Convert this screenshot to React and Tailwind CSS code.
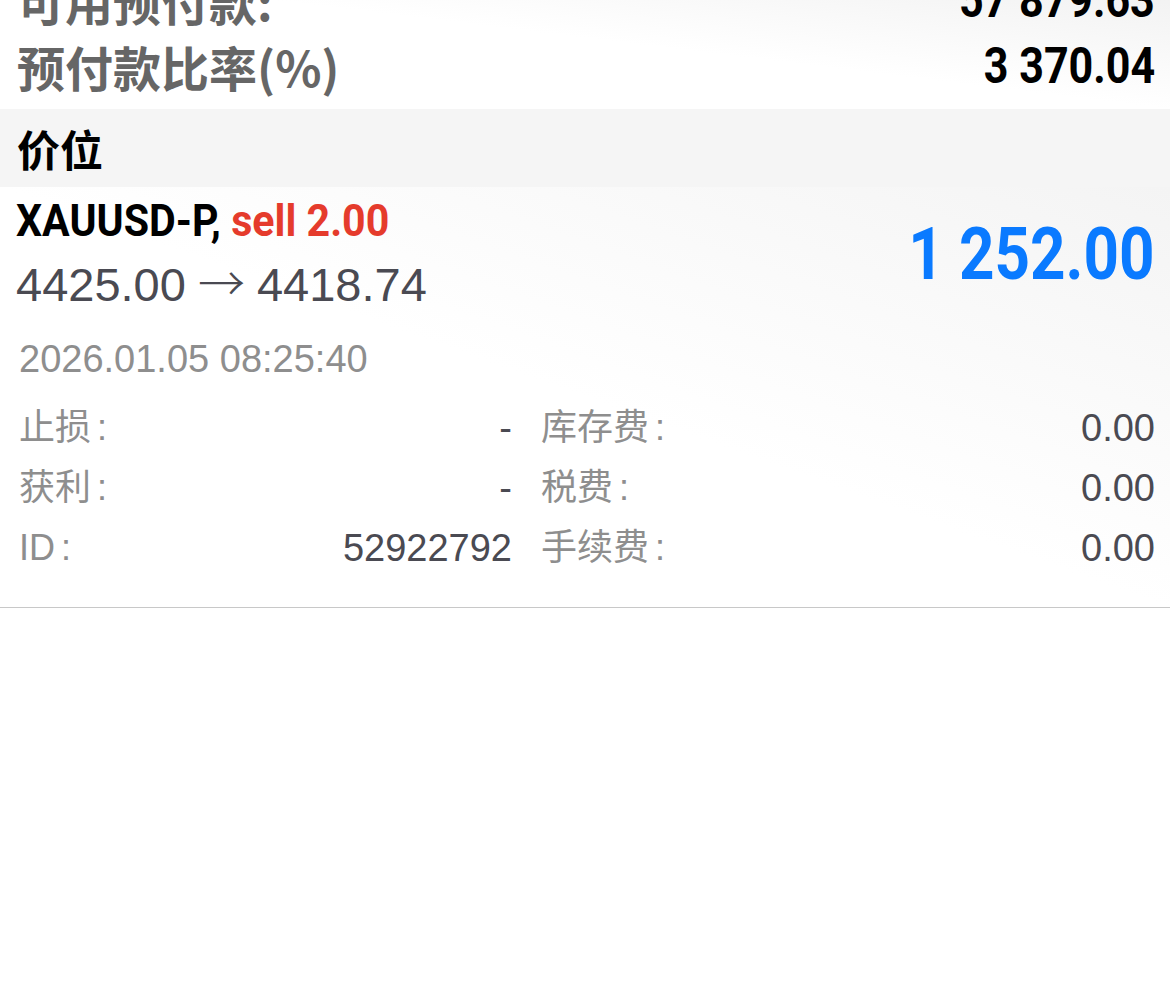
const bold = "font-['Roboto','Noto_Sans_CJK_SC',sans-serif] font-bold";
const cjkBold = "font-['Noto_Sans_CJK_SC',sans-serif] font-bold";
const regular = "font-['Liberation_Sans','Noto_Sans_CJK_SC',sans-serif]";

// Roboto bold squeezed a bit to look like the condensed face of the app
function Cond({ children, className = "", right = false }) {
  return (
    <span
      className={`inline-block whitespace-nowrap ${bold} ${right ? "origin-right" : "origin-left"} ${className}`}
    >
      {children}
    </span>
  );
}

function SummaryRow({ label, value }) {
  return (
    <div className="flex h-[66px] items-center justify-between pl-[17px] pr-[15px]">
      <span className={`${cjkBold} text-[48px] text-[#666666]`}>{label}</span>
      <Cond right className="scale-x-[0.86] text-[50px] text-black">{value}</Cond>
    </div>
  );
}

function Field({ label, value }) {
  return (
    <div className="flex h-[60px] items-center justify-between">
      <span className={`${regular} text-[36px] text-[#8e8e8e]`}>
        {label}
        <span className="ml-[6px]">:</span>
      </span>
      <span className={`${regular} text-[38px] text-[#4a4a52]`}>{value}</span>
    </div>
  );
}

export default function App() {
  return (
    <div className="h-[994px] w-[1170px] overflow-hidden bg-white">
      {/* account summary, scrolled so the first row is cut */}
      <div className="-mt-[33px] bg-gradient-to-bl from-[#efefef] via-white to-white pb-[10px]">
        <SummaryRow label="可用预付款:" value="57 879.63" />
        <SummaryRow label="预付款比率(%)" value="3 370.04" />
      </div>

      <div className="flex h-[78px] items-center bg-[#f5f5f5] pl-[17px]">
        <span className={`${cjkBold} text-[43px] text-black`}>价位</span>
      </div>

      <div className="bg-gradient-to-bl from-[#f4f4f4] via-white to-white pt-[3px]">
        <div className="flex items-start justify-between pl-[16px] pr-[15px]">
          <div>
            <div className="flex h-[62px] items-center">
              <Cond className="scale-x-[0.935] text-[44px] text-black">
                XAUUSD-P, <span className="text-[#e53b2c]">sell 2.00</span>
              </Cond>
            </div>
            <div className="flex h-[62px] items-center">
              <span className={`${regular} text-[47px] text-[#4a4a52]`}>
                4425.00
                <span className="mx-[12px] font-['Noto_Sans_CJK_SC',sans-serif] font-light">→</span>
                4418.74
              </span>
            </div>
          </div>
          <div className="flex h-[124px] items-center pt-[6px]">
            <Cond right className="scale-x-[0.86] text-[72px] text-[#0a7aff]">1 252.00</Cond>
          </div>
        </div>

        <div className="mt-[16px] flex h-[58px] items-center pl-[19px]">
          <span className={`${regular} text-[38px] text-[#8e8e8e]`}>2026.01.05 08:25:40</span>
        </div>

        <div className="mt-[10px] grid grid-cols-[493px_614px] gap-x-[29px] pl-[19px] pr-[15px] pb-[29px]">
          <div>
            <Field label="止损" value="-" />
            <Field label="获利" value="-" />
            <Field label="ID" value="52922792" />
          </div>
          <div>
            <Field label="库存费" value="0.00" />
            <Field label="税费" value="0.00" />
            <Field label="手续费" value="0.00" />
          </div>
        </div>
        <div className="border-b border-[#c8c8c8]" />
      </div>
    </div>
  );
}
